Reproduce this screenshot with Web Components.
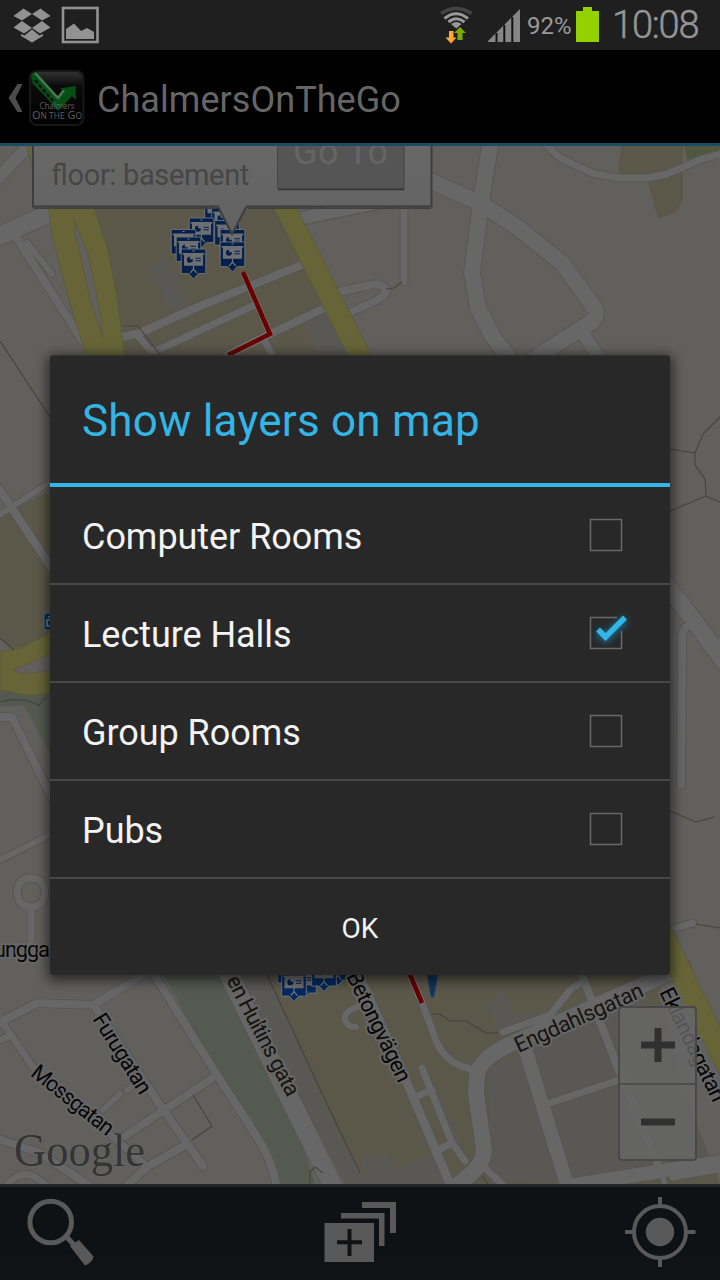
<!DOCTYPE html>
<html lang="en">
<head>
<meta charset="utf-8">
<title>ChalmersOnTheGo</title>
<style>
html,body{margin:0;height:100%;background:#000;overflow:hidden}
body{font-family:Roboto,"Noto Sans",sans-serif}
</style>
</head>
<body>
<chalmers-app></chalmers-app>
<script>
function define(name, html) {
  const t = document.createElement('template');
  t.innerHTML = html;
  customElements.define(name, class extends HTMLElement {
    constructor() {
      super();
      this.attachShadow({mode: 'open'}).append(t.content.cloneNode(true));
    }
  });
}

define('status-bar', `
<style>
:host{display:flex;align-items:center;height:50px;background:#1f1f1f;color:#959595;box-sizing:border-box;padding:0 21px 0 12px}
svg{display:block;flex:none}
.gap{flex:1}
.pct{font-size:24px;width:45px;margin:2px 4px 0 6px;letter-spacing:0;white-space:nowrap;color:#9a9a9a}
.time{font-size:38px;width:87px;margin-left:12px;white-space:nowrap;line-height:50px;font-weight:300;letter-spacing:-1.2px;-webkit-text-stroke:.5px #959595}
</style>
<svg width="40" height="50" viewBox="12 0 40 50"><g fill="#929292">
<path d="M13.5 16 23.5 8.500 32 14 22 20.500zM32 14 40.500 8.500 50.500 16 42 20.500zM13.500 27.500 22 21 32 28 24 33.500zM32 28 42 21 50.500 27.500 40 33.500zM21 34 24.500 35.500 32 29.500 39.500 35.500 43 34 43 36 32 42.500 21 36z"/></g></svg>
<svg style="margin-left:9px" width="38" height="50" viewBox="61 0 38 50"><rect x="63" y="8" width="34.500" height="34" fill="none" stroke="#929292" stroke-width="2.600"/><path d="M66 39V29L74 23.500 81 31 87 28 94 32V39z" fill="#929292"/></svg>
<span class="gap"></span>
<svg width="34" height="50" viewBox="440 0 34 50"><g fill="none" stroke-width="3.400"><path d="M441 13.500Q456 3.500 471.500 13.500" stroke="#444"/><path d="M444.500 18.500Q456 9 468 18.500M448.500 22Q456 15.500 464.500 22" stroke="#999" stroke-width="3"/></g><path d="M451 24Q456.500 20 461.500 24L456.300 28.500z" fill="#999"/><path d="M449 31h4.500v6.500h3L451 43.500 445.500 37.500H449z" fill="#ffa53a"/><path d="M457.500 40v-7h-3.500l6-6 6 6h-3.500v7z" fill="#7cab00"/></svg>
<svg style="margin-left:14px" width="33" height="50" viewBox="488 0 33 50"><path d="M487 42 520 9V42z" fill="#858585"/><path d="M496.500 33V42M504.300 25V42M512.300 17V42" stroke="#111" stroke-width="2"/></svg>
<span class="pct">92%</span>
<svg width="24" height="50" viewBox="576 0 24 50"><path d="M576 11h7V7h9v4h7v31h-23z" fill="#93d200"/></svg>
<span class="time">10:08</span>`);

define('app-logo', `
<style>:host{display:block;width:56px;height:56px}svg{display:block}text{font-family:"Open Sans",sans-serif;fill:#606060}</style>
<svg width="56" height="56" viewBox="29 70 56 56">
<defs><linearGradient id="g" x1="0" y1="0" x2="0" y2="1"><stop offset="0" stop-color="#333"/><stop offset=".28" stop-color="#0b0b0b"/><stop offset="1" stop-color="#000"/></linearGradient></defs>
<rect x="30" y="71" width="53.500" height="54" rx="7" fill="url(#g)" stroke="#171717" stroke-width="2"/>
<path d="M31 75Q33 71 38 73L58 99 64 90 59.500 88.500 75.500 86 76 100 72 96 58 111 45 96 33 84z" fill="#064f14"/>
<path d="M35 73 58 98 64 90" stroke="#4b7653" stroke-width="2.500" fill="none"/>
<path d="M35 80 53 101" stroke="#111" stroke-width="2.500" stroke-dasharray="4 2"/>
<text x="39.500" y="108.500" font-size="8.500" textLength="35" lengthAdjust="spacingAndGlyphs">Chalmers</text>
<text x="32" y="119" font-size="11" textLength="50" lengthAdjust="spacingAndGlyphs">O<tspan font-size="8.500">N THE</tspan> G<tspan font-size="8.500">O</tspan></text>
</svg>`);

define('action-bar', `
<style>
:host{display:flex;align-items:center;height:96px;box-sizing:border-box;background:#000;border-bottom:3px solid #1a4d62;padding-left:8px;color:#666}
svg{display:block;margin-right:6px}
.t{font-size:36px;margin:6px 0 0 12px;white-space:nowrap;letter-spacing:.05px}
app-logo{margin-top:3px}
</style>
<svg width="15" height="93" viewBox="8 50 15 93"><path d="M17.500 84H22.500L15.500 98 22.500 112H17.500L8.500 98z" fill="#4c4c4c"/></svg>
<app-logo></app-logo><span class="t"><slot></slot></span>`);

define('city-map', `
<style>
:host{display:block;width:720px;height:1038px}
svg{display:block}
.c,.r{fill:none;stroke-linejoin:round;stroke-linecap:round}
.b{fill:none;stroke:#45433b;stroke-width:1.100}
text{font-family:Roboto,sans-serif}
.l{font-size:22px;fill:#050505;stroke:#666;stroke-width:4px;paint-order:stroke;stroke-linejoin:round}
.k{fill:#17130f}
</style>
<svg width="720" height="1038" viewBox="0 146 720 1038">
<defs>
<symbol id="m" viewBox="0 0 26 32" overflow="visible"><path d="M.5 1.500Q.5.500 1.500.500H24.500Q25.500.500 25.500 1.500V25.500H18L13 31 8 25.500H.5z" fill="var(--mk,#05204a)" stroke="#74767a" stroke-width=".9"/><path d="M2 4.500h22v1.800h-1.300V17.500H3.300V6.300H2z" fill="#6d6f72"/><path d="M13 17v4L9.500 25M13 21l3.500 4" stroke="#777" stroke-width="1.200" fill="none"/><path d="M9.500 8.500V11h2.800A3 3 0 1 1 9.500 8.500zM15 9.300h5.500v1H15zM15 12h5.500v1H15z" fill="#05204a"/><path d="M12 2h2v1h-2z" fill="#888"/></symbol>
<linearGradient id="cg" x1="0" y1="0" x2="0" y2="1"><stop offset="0" stop-color="#686868"/><stop offset="1" stop-color="#626262"/></linearGradient>
</defs>
<rect y="146" width="720" height="1038" fill="#61605d"/>
<g fill="#5b5749">
<path d="M85 200H275L350 360H115z"/><path d="M621 146 618 173 648 182 658 219 676 212 683 199V146z"/><path d="M0 517 60 485V640L13 648 0 638z"/>
<path d="M250 960H690L720 1080V1184H366L360 1173 325 1100 267 975z"/>
</g>
<path d="M684 146 687 160 720 150V146z" fill="#505940"/>
<path d="M0 688H60V770L23 705 0 707z M155 960 217 1070 253 1120 278 1184H315L290 1107 220 960z" fill="#545a50"/>
<g fill="#595854"><path d="M147 267 168 257 190 303 172 313zM303 323 327 313 350 360H318z"/>
<path d="M235 975H267L325 1100 360 1173 366 1184H345z"/>
<path d="M360 1160 388 1153 397 1167 433 1155 450 1184H366zM485 1005 503 990 515 1015 530 1011V1018L500 1032zM440 1094 468 1160 455 1155 435 1105z"/>
<path d="M488 1068 640 995 680 1075 720 1140V1160L580 1180 490 1184z"/></g>
<path d="M655 960H687L720 1027V1184L680 1080z" fill="#61605d"/>
<g id="roads"></g>
<g fill="#676538" stroke="#59573d" stroke-width=".8">
<path d="M27 146H32L35 165 33 170zM47 195 52 235 68 297 87 358H125L117 297 108 250 93 205 90 195zM74 220 75 235Q78 242 80 253L90 300 103 338 100 313 89 257z" fill-rule="evenodd"/>
<path d="M267 195 349 358H373L290 195z"/>
<path d="M0 652 23 647 60 628V692L30 696 0 690zM13 670 37 660 55 651V670L22 674z" fill-rule="evenodd"/>
<path d="M663 910 687 960 724 1035V1083L670 975z"/></g>
<g class="b">
<path d="M0 341 50 417M123 326H138L160 355M386 289 394 288 402 282M670 449 695 453M720 417 703 434 695 453V465L705 479 706 496 670 511M706 496 720 502M670 811 696 822 715 817M696 924 720 928M193 1095 212 1126 192 1140M267 975 325 1100 360 1173M310 1184V1172L315 1167 323 1173M432 1014H440L450 1021H466L486 1033H498M0 638 14 650M0 702Q20 696 39 705L46 697M482 1176 488 1184"/></g>
<path d="M243 272 270 334 228 355M408 970 422 1003" fill="none" stroke="#747474" stroke-width="6"/>
<path d="M243 272 270 334 228 355M408 970 422 1003" fill="none" stroke="#690000" stroke-width="4.600"/>
<path d="M426 970h13L434 997h-3z" fill="#143454" stroke="#2c4d6c"/>
<g id="marks"></g>
<rect x="44" y="613" width="17" height="17" rx="2.500" fill="#093259" stroke="#5c6b78"/><path d="M48 617h8M47 620h8v6h-8z" stroke="#778490" fill="none" stroke-width="1.500"/>
<text class="l" x="-6" y="957" textLength="56">ungga</text>
<text class="l" transform="translate(92 1019) rotate(58)" textLength="91">Furugatan</text>
<text class="l" transform="translate(29.500 1075) rotate(38.500)" textLength="99">Mossgatan</text>
<text class="l k" transform="translate(226 980) rotate(62.500)" textLength="133">en Hultins gata</text>
<text class="l" transform="translate(346 976) rotate(64)" textLength="120">Betongvägen</text>
<text class="l k" transform="translate(518.500 1053) rotate(-24.300)" textLength="139">Engdahlsgatan</text>
<text class="l" transform="translate(659 992) rotate(64)" textLength="124">Eklandagatan</text>
<text x="14" y="1166" font-size="47" textLength="131" lengthAdjust="spacingAndGlyphs" style="font-family:'Liberation Serif',serif" fill="#343434" stroke="#6b6b6b" stroke-width="1.200" paint-order="stroke">Google</text>
<path d="M33 140V206.500H218L232 234 246.500 206.500H431.500V140z" fill="url(#cg)" stroke="#3d3d3d" stroke-width="2"/>
<path d="M34 208.300H217M248 208.300H431" stroke="#404040" stroke-width="1.500"/>
<rect x="277" y="130" width="127.500" height="59" rx="2" fill="#555"/><path d="M277.500 146V188.500H404V146" fill="none" stroke="#474747"/><path d="M278 189.500H404" stroke="#353535" stroke-width="1.500"/>
<text x="51" y="185" font-size="29" fill="#464646" textLength="198">floor: basement</text>
<text x="293" y="164" font-size="36" fill="#656565" textLength="95">Go To</text>
</svg>`);

const ROADS = [
  [18,'M-5 238 50 213'],[8,'M18 240 82 340'],[6,'M27 243 52 274'],[12,'M-4 180 34 140'],
  [8,'M122 337 140 333 193 309 304 264'],[7,'M138 336 150 350 158 350 257 304'],[8,'M228 355 272 333 325 308 347 314 377 300Q390 292 384 287 378 283 370 285L338 292'],
  [7,'M263 338 275 360'],[13,'M298 219 404 197'],[7,'M404 200V282'],
  [16,'M491 140 482 195 472 273 478 308 493 337 512 362'],[16,'M428 180 480 203 517 227 563 264 593 306Q600 316 590 323L532 360'],
  [13,'M582 332 602 362'],[7,'M543 142 560 158 592 173 617 178H647L667 174 702 159 725 153'],
  [6,'M-4 517 55 479'],[8,'M-5 483 55 573'],[8,'M-4 717H12L58 810'],[6,'M-4 862 55 832'],[7,'M31 908V945'],[7,'M31 878Q44 878 45 892 44 907 31 907 18 906 17 892 18 878 31 878'],
  [17,'M660 577 695 622 725 663'],[7,'M715 645 730 636'],[8,'M690 625Q682 628 682 640L681 785'],[7,'M672 929 693 923'],
  [8,'M145 960 217 1075 257 1137Q272 1160 277 1188'],[8,'M-5 1025 37 1003 93 1005 155 968'],[7,'M-4 1042 10 1036M2 1022 33 1067 143 1163'],
  [8,'M95 1007 162 1108 203 1166'],[8,'M217 1075 125 1136M187 1144 147 1167 124 1188'],[6,'M103 1110 120 1094M127 1090 135 1084'],[8,'M-4 1138 40 1153 93 1188'],[7,'M5 1187Q25 1162 47 1187'],
  [19,'M222 960 290 1099 338 1196'],[9,'M348 950 410 1090 450 1184'],[7,'M422 1068 452 1143 465 1161M415 1097 432 1090M438 1150 452 1143'],
  [7,'M408 970 422 1003 437 1043Q447 1065 475 1070'],[6,'M360 1006Q343 1011 345 1020 348 1028 356 1027'],
  [16,'M680 968 520 1040Q480 1056 477 1075L476 1093 484 1150Q484 1168 450 1190'],[14,'M525 1048 568 1188'],[7,'M550 1103 625 1078'],[8,'M580 970 618 1068 657 1162'],
  [7,'M503 1032 550 1015 570 990 584 980'],[7,'M484 1167 505 1187'],[14,'M568 1186 725 1161'],[5,'M657 1162 665 1184M672 1178 720 1170']
];
class CampusMap extends customElements.get('city-map') {
  constructor() {
    super();
    const r = this.shadowRoot;
    r.getElementById('roads').innerHTML =
      ROADS.map(([w, d]) => `<path class="c" stroke="#555450" stroke-width="${w + 1.6}" d="${d}"/>`).join('') +
      ROADS.map(([w, d]) => `<path class="r" stroke="#676767" stroke-width="${w}" d="${d}"/>`).join('');
    const top = [[204,196],[211,207],[188.500,217.500],[214,220],[170.500,229],[175.500,236.500],[219.500,229],[180.500,248.500],[219.500,241.500]];
    const low = [[325,955],[277,958],[291,968],[311,961],[281,971]];
    r.getElementById('marks').innerHTML =
      top.map(([x, y]) => `<use href="#m" x="${x}" y="${y}" width="26" height="31.500"/>`).join('') +
      '<g style="--mk:#04295e">' + low.map(([x, y]) => `<use href="#m" x="${x}" y="${y}" width="26" height="31.500"/>`).join('') + '</g>';
  }
}
customElements.define('campus-map', CampusMap);

define('zoom-control', `
<style>
:host{display:flex;flex-direction:column;width:79px;height:155px;box-sizing:border-box;border:2px solid #484848;border-radius:4px;background:rgba(103,103,103,.82)}
div{flex:1;display:grid;place-items:center}
div+div{border-top:2px solid #4e4e4e}
svg{display:block}
</style>
<div><svg width="34" height="34"><path d="M0 17H34M17 0V34" stroke="#303030" stroke-width="7"/></svg></div>
<div><svg width="34" height="34"><path d="M0 17H34" stroke="#303030" stroke-width="7"/></svg></div>`);

define('bottom-bar', `
<style>
:host{display:flex;justify-content:space-between;height:96px;box-sizing:border-box;border-top:3px solid #212326;background:linear-gradient(#101115,#0e1214 70%,#111213 75%);padding:0 20px}
svg{display:block}
</style>
<svg width="80" height="93" viewBox="20 1187 80 93"><circle cx="50.700" cy="1222" r="20.800" fill="none" stroke="#595959" stroke-width="5"/><path d="M66 1236 74 1245" stroke="#595959" stroke-width="5"/><path d="M70 1246 79 1240 93.500 1256.500Q93 1262 85 1265.500z" fill="#595959"/></svg>
<svg width="80" height="93" viewBox="320 1187 80 93"><path d="M324.500 1223H374V1262H324.500zM341 1213H384.500V1246H379V1218.500H341zM362 1202H396V1233H390V1208H362z" fill="#595959"/><path d="M337 1242.300H362M349.500 1229V1256" stroke="#101214" stroke-width="4"/></svg>
<svg width="80" height="93" viewBox="620 1187 80 93"><circle cx="660" cy="1232" r="26" fill="none" stroke="#595959" stroke-width="4"/><circle cx="660" cy="1232" r="14.200" fill="#595959"/><path d="M625 1232H634M686 1232H695.500M660 1197V1207M660 1257V1267" stroke="#595959" stroke-width="4"/></svg>`);

define('layer-row', `
<style>
:host{display:flex;align-items:center;justify-content:space-between;height:98px;box-sizing:border-box;border-bottom:2px solid #484848;padding:0 40px 0 32px;color:#f3f3f3;font-size:36px}
span{white-space:nowrap;padding-top:3px;letter-spacing:-.05px}
svg{display:block;overflow:visible}
.on{display:none}
:host([checked]) .on{display:inline}
:host([checked]) .off{display:none}
</style>
<span><slot></slot></span>
<svg width="48" height="48" viewBox="0 0 48 48"><defs><filter id="f" x="-50%" y="-50%" width="200%" height="200%"><feGaussianBlur stdDeviation="3.500"/></filter></defs>
<rect class="off" x="8.500" y="8.500" width="31" height="31" fill="none" stroke="#686868" stroke-width="1.500"/>
<g class="on"><path d="M35 8.500H8.500V39.500H39.500V22" fill="none" stroke="#686868" stroke-width="1.500"/><path d="M16 22.500 23.500 29.500 43 10" fill="none" stroke="#148fc0" stroke-width="7" filter="url(#f)" opacity=".75"/><path d="M16 20.500 23.500 28 43 8.500" fill="none" stroke="#33b5e5" stroke-width="5.500"/></g></svg>`);

define('layers-dialog', `
<style>
:host{display:flex;flex-direction:column;box-sizing:border-box;width:620px;height:620px;background:#282828;border-radius:4px;box-shadow:0 3px 12px 3px rgba(0,0,0,.55),inset 0 1px 1px #343434;overflow:hidden}
h1{margin:0;height:128px;line-height:132px;padding-left:32px;font-weight:400;font-size:44px;letter-spacing:.24px;color:#33b5e5;border-bottom:4px solid #33b5e5;white-space:nowrap}
.ok{flex:1;display:grid;place-items:center;color:#f3f3f3;font-size:28px;padding-top:2px}
</style>
<h1>Show layers on map</h1>
<slot></slot>
<div class="ok">OK</div>`);

define('chalmers-app', `
<style>
:host{display:flex;flex-direction:column;position:relative;width:720px;height:1280px;overflow:hidden}
status-bar,action-bar,bottom-bar,campus-map{flex:none}
zoom-control{position:absolute;right:23px;bottom:119px}
layers-dialog{position:absolute;left:50px;top:355px}
</style>
<status-bar></status-bar>
<action-bar>ChalmersOnTheGo</action-bar>
<campus-map></campus-map>
<bottom-bar></bottom-bar>
<zoom-control></zoom-control>
<layers-dialog>
<layer-row>Computer Rooms</layer-row>
<layer-row checked>Lecture Halls</layer-row>
<layer-row>Group Rooms</layer-row>
<layer-row>Pubs</layer-row>
</layers-dialog>`);
</script>
</body>
</html>
